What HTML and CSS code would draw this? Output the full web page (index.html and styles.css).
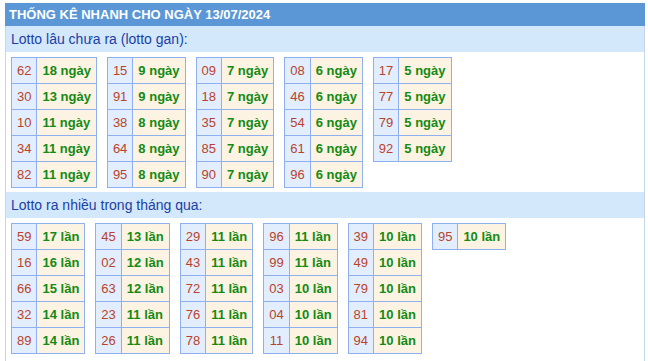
FILE: index.html
```html
<!DOCTYPE html>
<html lang="vi">
<head>
<meta charset="utf-8">
<title>Thống kê nhanh</title>
<link rel="stylesheet" href="styles.css">
</head>
<body>
<div class="box">
  <div class="head">THỐNG KÊ NHANH CHO NGÀY 13/07/2024</div>
  <div class="sub">Lotto lâu chưa ra (lotto gan):</div>
  <div class="group">
    <table class="st"><tr><td class="n">62</td><td class="v">18 ngày</td></tr><tr><td class="n">30</td><td class="v">13 ngày</td></tr><tr><td class="n">10</td><td class="v">11 ngày</td></tr><tr><td class="n">34</td><td class="v">11 ngày</td></tr><tr><td class="n">82</td><td class="v">11 ngày</td></tr></table>
    <table class="st"><tr><td class="n">15</td><td class="v">9 ngày</td></tr><tr><td class="n">91</td><td class="v">9 ngày</td></tr><tr><td class="n">38</td><td class="v">8 ngày</td></tr><tr><td class="n">64</td><td class="v">8 ngày</td></tr><tr><td class="n">95</td><td class="v">8 ngày</td></tr></table>
    <table class="st"><tr><td class="n">09</td><td class="v">7 ngày</td></tr><tr><td class="n">18</td><td class="v">7 ngày</td></tr><tr><td class="n">35</td><td class="v">7 ngày</td></tr><tr><td class="n">85</td><td class="v">7 ngày</td></tr><tr><td class="n">90</td><td class="v">7 ngày</td></tr></table>
    <table class="st"><tr><td class="n">08</td><td class="v">6 ngày</td></tr><tr><td class="n">46</td><td class="v">6 ngày</td></tr><tr><td class="n">54</td><td class="v">6 ngày</td></tr><tr><td class="n">61</td><td class="v">6 ngày</td></tr><tr><td class="n">96</td><td class="v">6 ngày</td></tr></table>
    <table class="st"><tr><td class="n">17</td><td class="v">5 ngày</td></tr><tr><td class="n">77</td><td class="v">5 ngày</td></tr><tr><td class="n">79</td><td class="v">5 ngày</td></tr><tr><td class="n">92</td><td class="v">5 ngày</td></tr></table>
  </div>
  <div class="sub">Lotto ra nhiều trong tháng qua:</div>
  <div class="group">
    <table class="st"><tr><td class="n">59</td><td class="v">17 lần</td></tr><tr><td class="n">16</td><td class="v">16 lần</td></tr><tr><td class="n">66</td><td class="v">15 lần</td></tr><tr><td class="n">32</td><td class="v">14 lần</td></tr><tr><td class="n">89</td><td class="v">14 lần</td></tr></table>
    <table class="st"><tr><td class="n">45</td><td class="v">13 lần</td></tr><tr><td class="n">02</td><td class="v">12 lần</td></tr><tr><td class="n">63</td><td class="v">12 lần</td></tr><tr><td class="n">23</td><td class="v">11 lần</td></tr><tr><td class="n">26</td><td class="v">11 lần</td></tr></table>
    <table class="st"><tr><td class="n">29</td><td class="v">11 lần</td></tr><tr><td class="n">43</td><td class="v">11 lần</td></tr><tr><td class="n">72</td><td class="v">11 lần</td></tr><tr><td class="n">76</td><td class="v">11 lần</td></tr><tr><td class="n">78</td><td class="v">11 lần</td></tr></table>
    <table class="st"><tr><td class="n">96</td><td class="v">11 lần</td></tr><tr><td class="n">99</td><td class="v">11 lần</td></tr><tr><td class="n">03</td><td class="v">10 lần</td></tr><tr><td class="n">04</td><td class="v">10 lần</td></tr><tr><td class="n">11</td><td class="v">10 lần</td></tr></table>
    <table class="st"><tr><td class="n">39</td><td class="v">10 lần</td></tr><tr><td class="n">49</td><td class="v">10 lần</td></tr><tr><td class="n">79</td><td class="v">10 lần</td></tr><tr><td class="n">81</td><td class="v">10 lần</td></tr><tr><td class="n">94</td><td class="v">10 lần</td></tr></table>
    <table class="st"><tr><td class="n">95</td><td class="v">10 lần</td></tr></table>
  </div>
</div>
</body>
</html>
```

FILE: styles.css
```css
html, body {
  margin: 0;
  padding: 0;
  background: #ffffff;
}
body {
  padding: 3px 0 0 5px;
  font-family: "Liberation Sans", Arial, sans-serif;
}
.box {
  width: 638px;
  min-height: 400px;
  border-left: 1px solid #c6d5ea;
  border-right: 1px solid #c6d5ea;
  background: #ffffff;
}
.head {
  height: 23px;
  line-height: 23px;
  margin: 0 -1px;
  padding-left: 4px;
  background: #5b97d6;
  color: #ffffff;
  font-weight: bold;
  font-size: 13px;
  white-space: nowrap;
}
.sub {
  height: 26px;
  line-height: 26px;
  padding-left: 5px;
  background: #d4e8fb;
  color: #1b3fa6;
  font-size: 14px;
}
.group {
  display: flex;
  align-items: flex-start;
  gap: 10px;
  padding: 5px 5px 4px;
}
.st {
  border-collapse: collapse;
  font-size: 13px;
}
.st td {
  border: 1px solid #8fb0ee;
  line-height: 25px;
  padding: 0 5px;
  white-space: nowrap;
}
.st .n {
  background: #e2eefe;
  color: #b8432b;
  text-align: center;
}
.st .v {
  background: #fdf3e2;
  color: #148a14;
  font-weight: bold;
}
```
